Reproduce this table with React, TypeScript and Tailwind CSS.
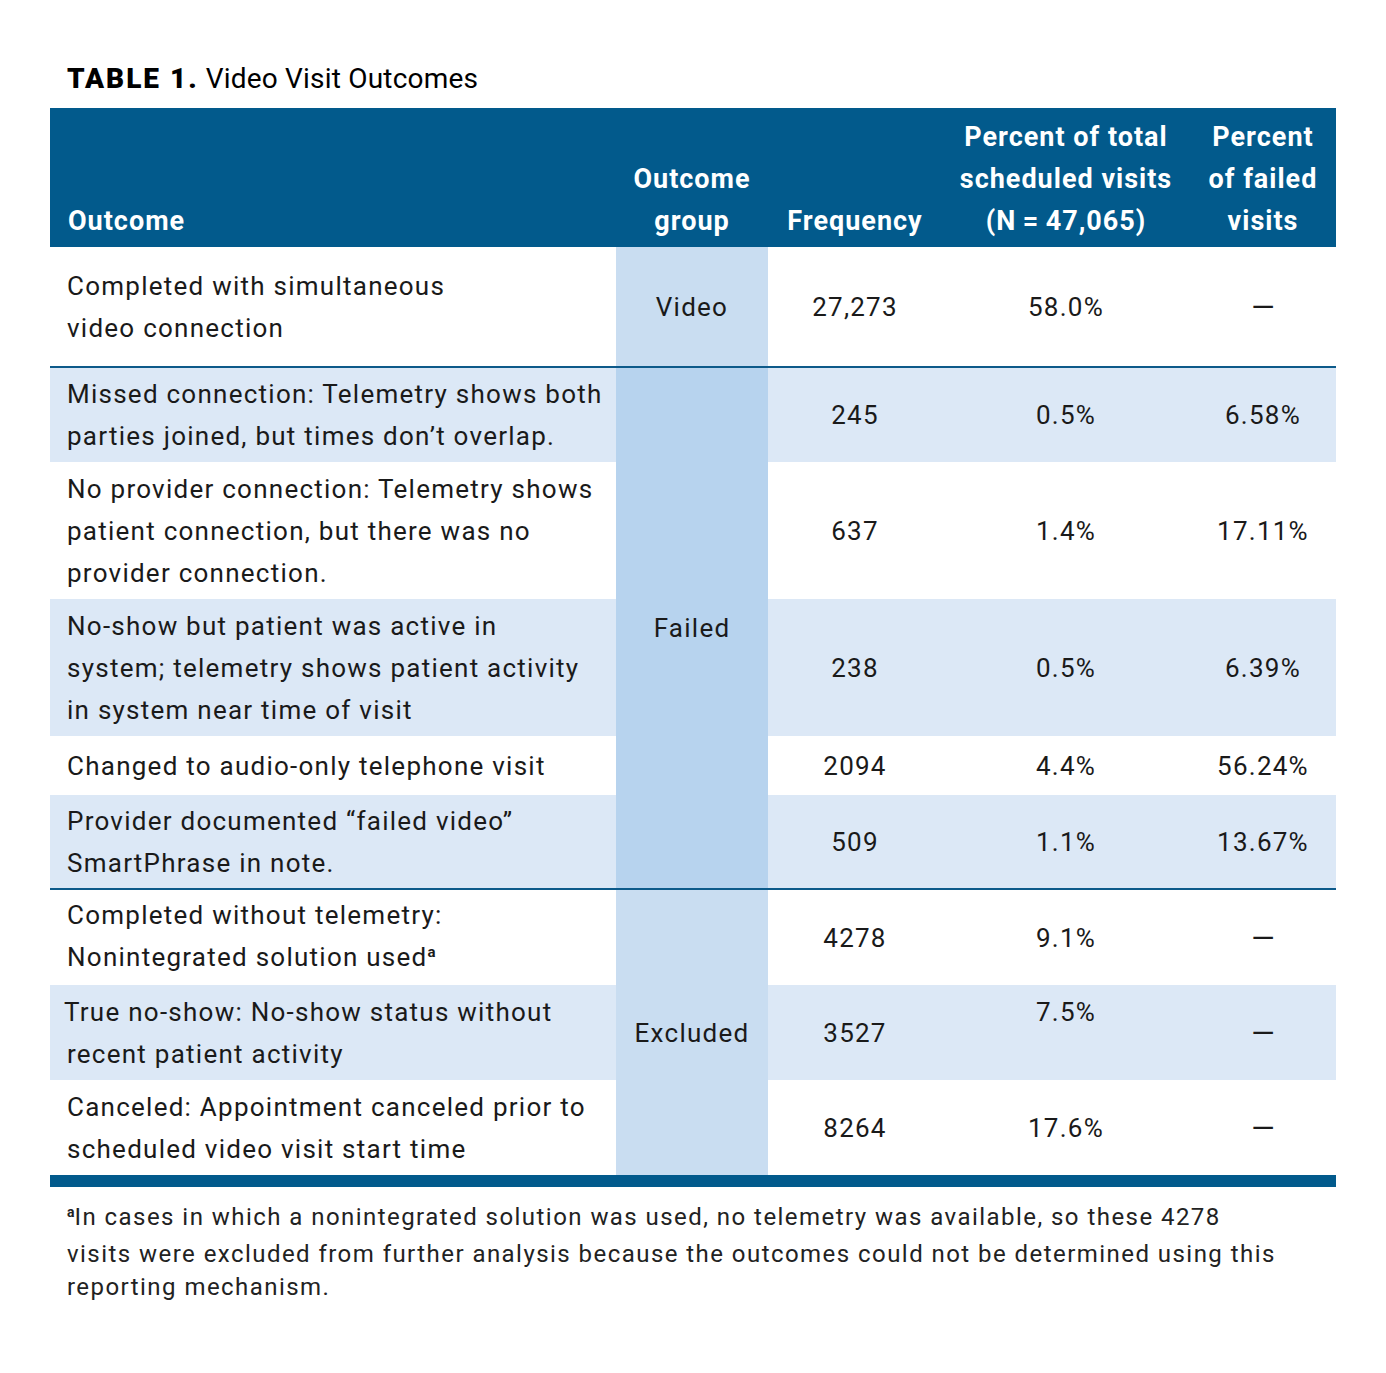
import React from 'react';

type Row = {
    label: React.ReactNode;
    h: string;
    freq: string;
    pct: string;
    failed: string;
    shaded?: boolean;
    pctTop?: boolean;
};

type Section = {
    group: string;
    groupBg: string;
    span: string;
    border: boolean;
    rows: Row[];
};

const Sup = () => <span className="relative -top-[9px] text-[15px] font-bold tracking-normal">a</span>;

const Dash = () => <span className="text-[30px] leading-[42px] tracking-normal">—</span>;

const sections: Section[] = [
    {
        group: 'Video',
        groupBg: 'bg-[#c9ddf1]',
        span: 'row-span-1',
        border: true,
        rows: [
            {
                label: <>Completed with simultaneous<br />video connection</>,
                h: 'h-[119px]',
                freq: '27,273',
                pct: '58.0%',
                failed: '—',
            },
        ],
    },
    {
        group: 'Failed',
        groupBg: 'bg-[#b7d3ee]',
        span: 'row-span-5',
        border: true,
        rows: [
            {
                label: <>Missed connection: Telemetry shows both<br />parties joined, but times don’t overlap.</>,
                h: 'h-[94px]',
                freq: '245',
                pct: '0.5%',
                failed: '6.58%',
                shaded: true,
            },
            {
                label: <>No provider connection: Telemetry shows<br />patient connection, but there was no<br />provider connection.</>,
                h: 'h-[137px]',
                freq: '637',
                pct: '1.4%',
                failed: '17.11%',
            },
            {
                label: <>No-show but patient was active in<br />system; telemetry shows patient activity<br />in system near time of visit</>,
                h: 'h-[137px]',
                freq: '238',
                pct: '0.5%',
                failed: '6.39%',
                shaded: true,
            },
            {
                label: <>Changed to audio-only telephone visit</>,
                h: 'h-[59px]',
                freq: '2094',
                pct: '4.4%',
                failed: '56.24%',
            },
            {
                label: <>Provider documented “failed video”<br />SmartPhrase in note.</>,
                h: 'h-[93px]',
                freq: '509',
                pct: '1.1%',
                failed: '13.67%',
                shaded: true,
            },
        ],
    },
    {
        group: 'Excluded',
        groupBg: 'bg-[#c9ddf1]',
        span: 'row-span-3',
        border: false,
        rows: [
            {
                label: <>Completed without telemetry:<br />Nonintegrated solution used<Sup /></>,
                h: 'h-[95px]',
                freq: '4278',
                pct: '9.1%',
                failed: '—',
            },
            {
                label: <span className="-ml-[3px]">True no-show: No-show status without<br />recent patient activity</span>,
                h: 'h-[95px]',
                freq: '3527',
                pct: '7.5%',
                failed: '—',
                shaded: true,
                pctTop: true,
            },
            {
                label: <>Canceled: Appointment canceled prior to<br />scheduled video visit start time</>,
                h: 'h-[95px]',
                freq: '8264',
                pct: '17.6%',
                failed: '—',
            },
        ],
    },
];

const App: React.FC = () => {
    return (
        <div className="min-h-screen bg-white text-[#1a1a1a] px-[50px] pt-[58px]" style={{ fontFamily: 'Roboto, "Liberation Sans", sans-serif' }}>
            <h1 className="text-[28px] leading-[42px] pl-[17px] mb-[8px] text-black">
                <span className="font-black tracking-[2px]">TABLE 1.</span>{' '}
                <span className="font-normal tracking-[0.2px]">Video Visit Outcomes</span>
            </h1>

            <div className="w-[1286px]">
                {/* header */}
                <div className="grid grid-cols-[566px_152px_174px_248px_146px] h-[139px] bg-[#025a8c] text-white font-bold text-[27px] leading-[42px] tracking-[1px]">
                    <div className="flex items-end pl-[18px] pb-[5px]">Outcome</div>
                    <div className="flex items-end justify-center text-center pb-[5px]">Outcome<br />group</div>
                    <div className="flex items-end justify-center text-center pb-[5px]">Frequency</div>
                    <div className="flex items-end justify-center text-center pb-[5px] whitespace-nowrap">Percent of total<br />scheduled visits<br />(N{'\u2009'}={'\u2009'}47,065)</div>
                    <div className="flex items-end justify-center text-center pb-[5px]">Percent<br />of failed<br />visits</div>
                </div>

                {sections.map((sec) => (
                    <div
                        key={sec.group}
                        className={`grid grid-cols-[566px_152px_174px_248px_146px] text-[26px] leading-[42px] tracking-[1.25px] ${sec.border ? 'border-b-2 border-[#0d5a8a]' : ''}`}
                    >
                        {sec.rows.map((r, i) => {
                            const bg = r.shaded ? 'bg-[#dce8f6]' : 'bg-white';
                            return (
                                <React.Fragment key={i}>
                                    <div className={`${r.h} ${bg} flex items-center pl-[17px] whitespace-nowrap`}>
                                        <div>{r.label}</div>
                                    </div>
                                    {i === 0 && (
                                        <div className={`${sec.span} ${sec.groupBg} flex items-center justify-center`}>
                                            {sec.group}
                                        </div>
                                    )}
                                    <div className={`${bg} flex items-center justify-center`}>{r.freq}</div>
                                    <div className={`${bg} flex justify-center ${r.pctTop ? 'items-start pt-[6px]' : 'items-center'}`}>{r.pct}</div>
                                    <div className={`${bg} flex items-center justify-center`}>
                                        {r.failed === '—' ? <Dash /> : r.failed}
                                    </div>
                                </React.Fragment>
                            );
                        })}
                    </div>
                ))}

                <div className="h-[12px] bg-[#025a8c]" />
            </div>

            <p className="pl-[17px] pt-[14px] text-[24px] leading-[33.5px] tracking-[1.45px] text-[#222] whitespace-nowrap">
                <span className="relative -top-[8px] text-[14px] font-bold tracking-normal">a</span>In cases in which a nonintegrated solution was used, no telemetry was available, so these 4278
                <br />
                visits were excluded from further analysis because the outcomes could not be determined using this
                <br />
                reporting mechanism.
            </p>
        </div>
    );
};

export default App;
